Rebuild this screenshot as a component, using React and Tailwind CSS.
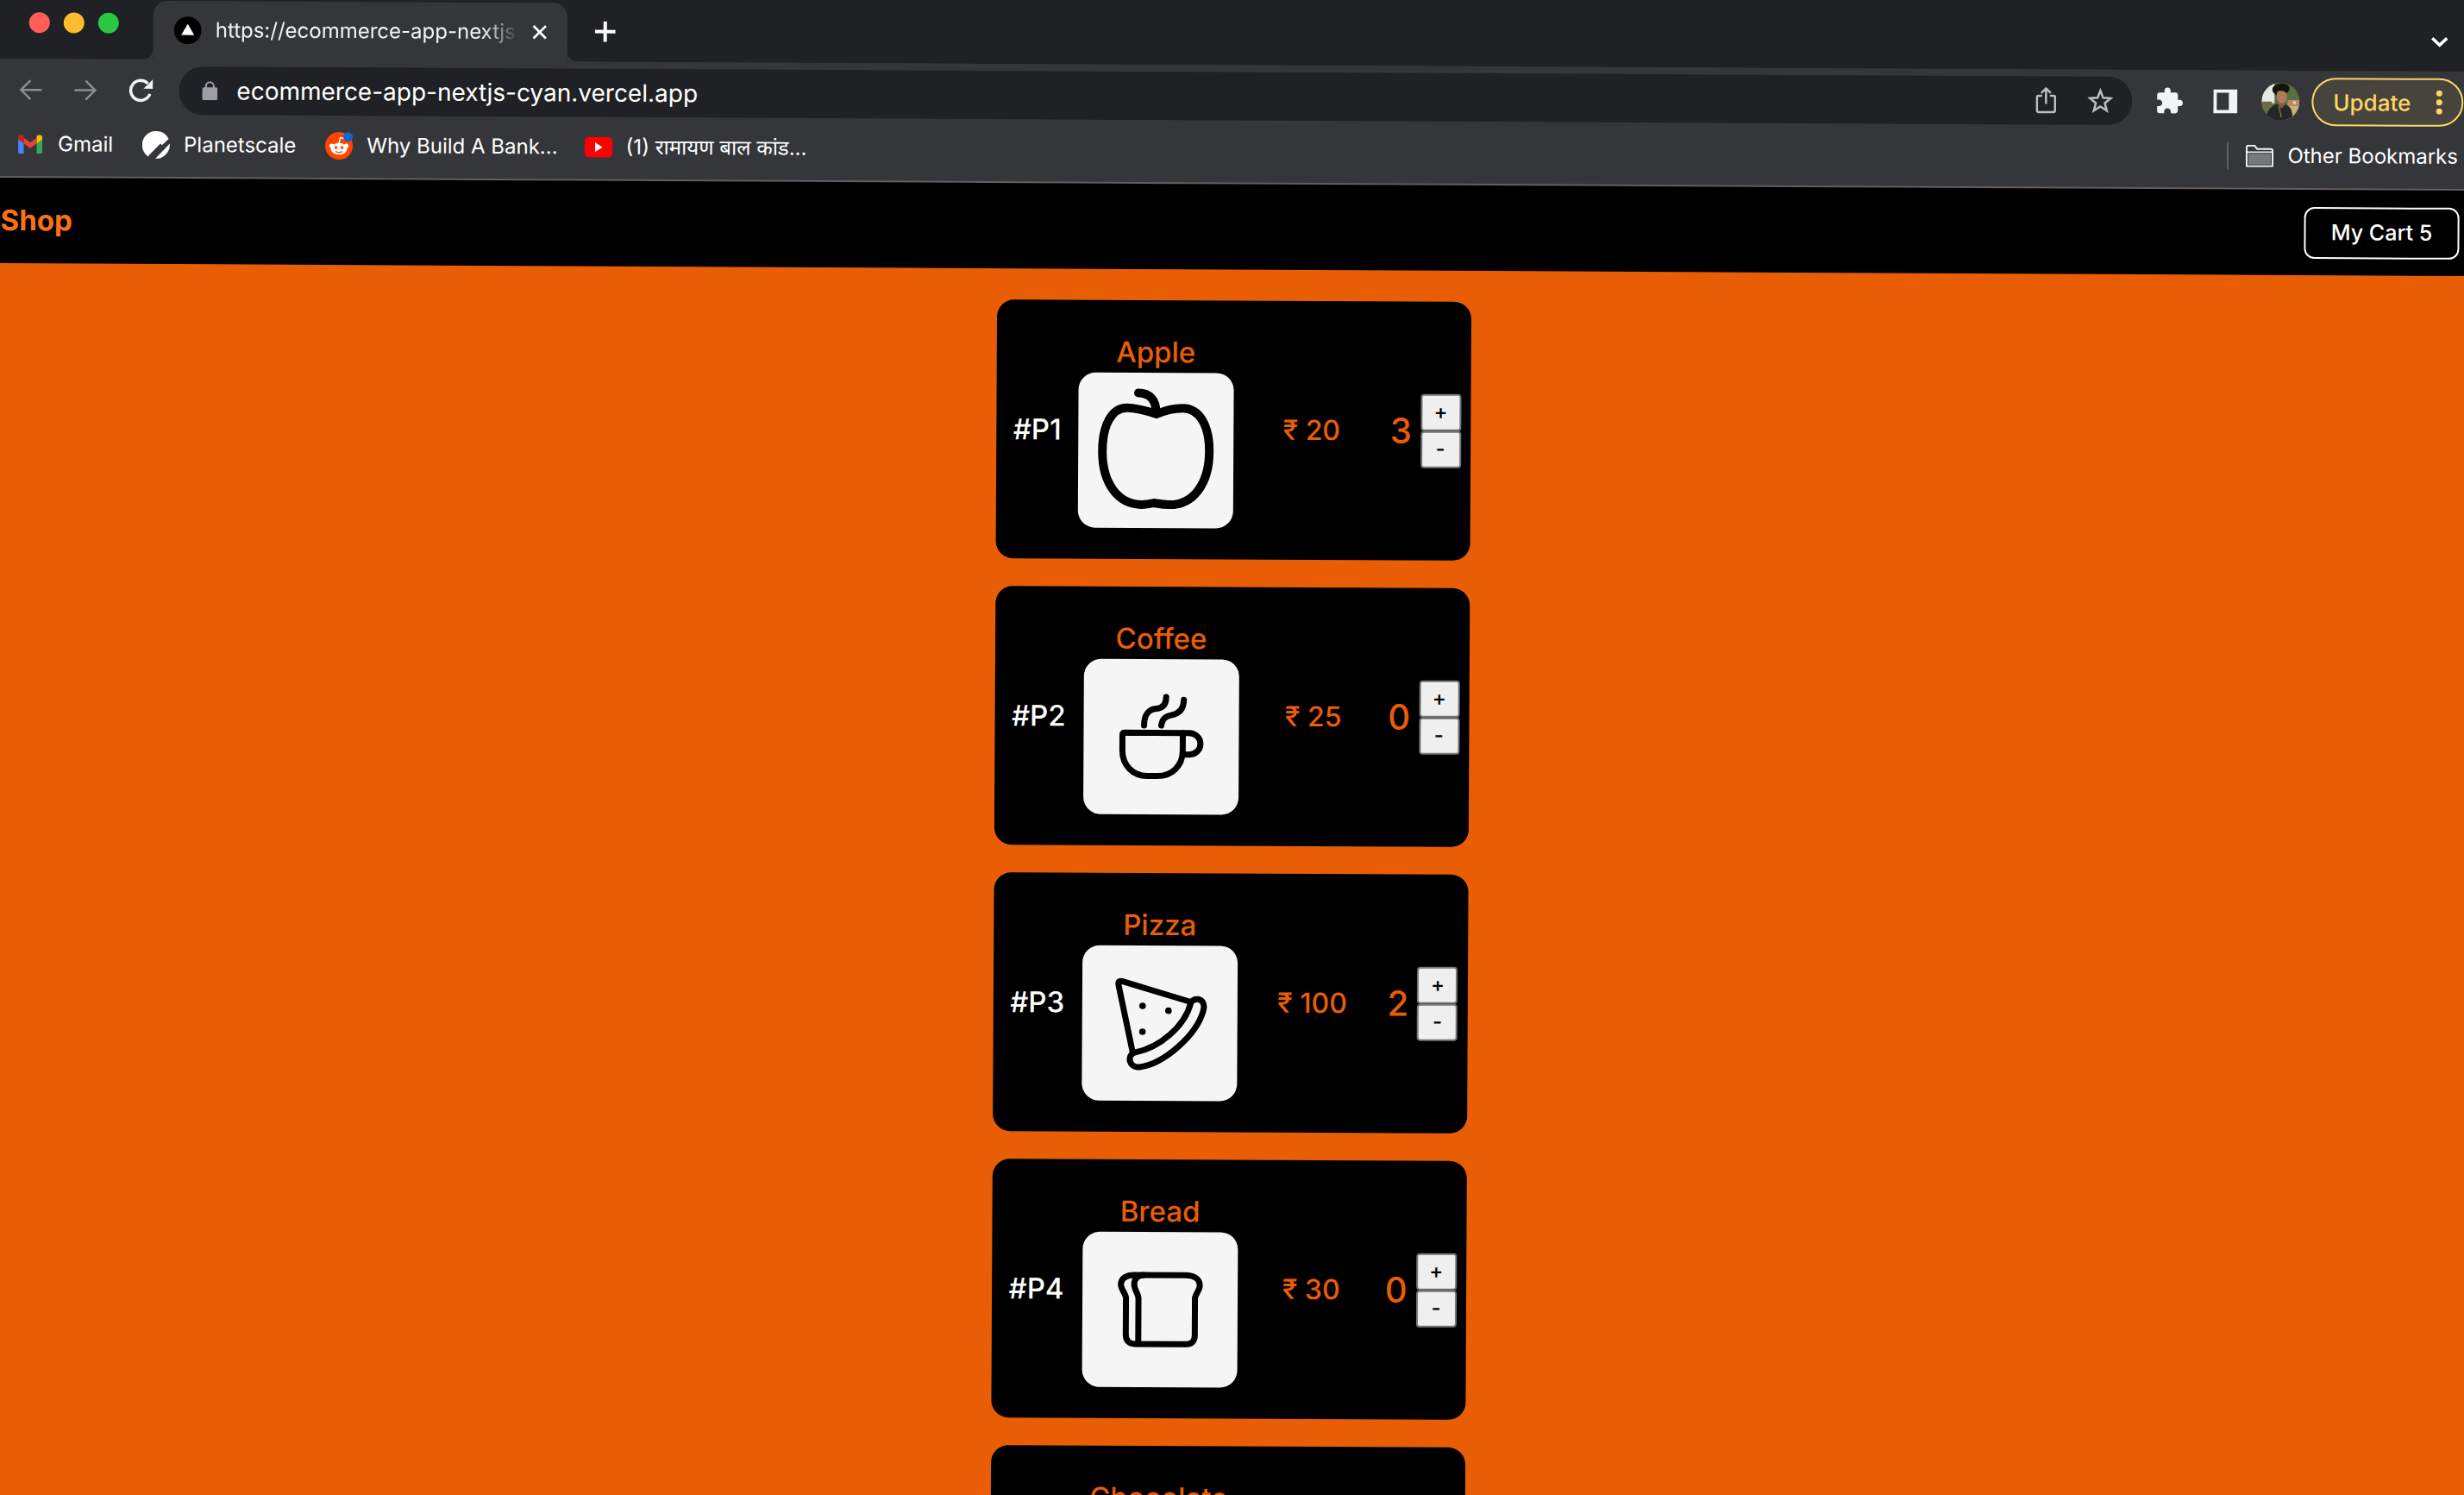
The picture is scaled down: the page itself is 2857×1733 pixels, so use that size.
import React from "react";
import { MdExtension } from "react-icons/md";

const LABEL_WIDTHS = { sm: "w-[55px]", md: "w-[63px]", lg: "w-[65px]" };

function AppleIcon() {
  return (
    <svg viewBox="0 0 180 180" className="size-full" fill="none" stroke="#000" strokeWidth="10" aria-hidden="true">
      <path d="M69.5 23.5C82 23.5 90 31 90 46" strokeLinecap="round" />
      <path d="M90.5 48C78 44 67 41 56.5 41C38 41 28 62 28 91C28 128 46 153 74 153C80 153 84 152 88 151C94 152 98 153 106 153C134 153 152 128 152 91C152 62 141 41 121 41C112 41 102 43 90.5 48Z" />
    </svg>
  );
}

function CoffeeIcon() {
  return (
    <svg viewBox="0 0 180 180" className="size-full" fill="none" stroke="#000" strokeWidth="7" strokeLinecap="round" strokeLinejoin="round" aria-hidden="true">
      <path d="M48 85.5H115V106C115 124 102 135.5 86 135.5H74C57 135.5 45 123 45 106V88Q45 85.5 48 85.5Z" />
      <path d="M115 85.5H122C130 85.5 135.5 91 135.5 98C135.5 105 130 110.5 122 110.5H116" />
      <path d="M70 77C70 64 76 58 84 57.5C91 57 95.5 53 95.5 44" />
      <path d="M90 77C91 69 95 66 101 65C111 63 116 57 116 47" />
    </svg>
  );
}

function PizzaIcon() {
  return (
    <svg viewBox="0 0 180 180" className="size-full" fill="none" stroke="#000" strokeWidth="7" strokeLinejoin="round" aria-hidden="true">
      <path d="M125 65L46 41.5Q41 40.5 42 46L59 125" />
      <path d="M126 66C128 62.5 131 61.5 135 62C140.5 63.5 142 69 140.5 75C133 103 96 137 67 141C60 142 55 137 55.5 131C56 127 58 125 62 124C90 118 119 94 126 66Z" />
      <g fill="#000" stroke="none">
        <circle cx="70" cy="70" r="3.8" />
        <circle cx="100" cy="75.5" r="3.8" />
        <circle cx="70" cy="100" r="3.8" />
      </g>
    </svg>
  );
}

function BreadIcon() {
  return (
    <svg viewBox="0 0 180 180" className="size-full" fill="none" stroke="#000" strokeWidth="7" strokeLinejoin="round" aria-hidden="true">
      <path d="M60 50H119C129 50 136 54 136 62C136 68 130.5 72 130.5 77V120C130.5 126 127 130 121 130H61C54 130 50.5 126 50.5 119V77C50.5 72 44.5 67 44.5 61C44.5 54 51 50 60 50Z" />
      <path d="M72 50C64 50 60 54 60 61C60 67 65 72 65 77V130" />
    </svg>
  );
}

const PRODUCTS = [
  { name: "Apple", code: "#P1", price: "₹ 20", qty: 3, Icon: AppleIcon, label: "sm" },
  { name: "Coffee", code: "#P2", price: "₹ 25", qty: 0, Icon: CoffeeIcon, label: "md" },
  { name: "Pizza", code: "#P3", price: "₹ 100", qty: 2, Icon: PizzaIcon, label: "md" },
  { name: "Bread", code: "#P4", price: "₹ 30", qty: 0, Icon: BreadIcon, label: "lg" },
  { name: "Chocolate", label: "lg" },
];

const STEP_BUTTON = "h-[43px] w-[47px] rounded border-2 border-[#767676] bg-[#efefef] pb-0.5 text-2xl leading-8 text-black";

function ProductCard({ name, code, price, qty, Icon, label }) {
  return (
    <li className="flex h-[300px] w-[550px] items-center justify-between rounded-[20px] bg-black pr-[11px] pl-5 text-[33px] leading-[48px] font-medium text-[#e95d05]">
      <div className="flex items-center gap-5">
        <span className={`${LABEL_WIDTHS[label]} whitespace-nowrap text-white`}>{code}</span>
        <div className="flex w-[180px] flex-col items-center">
          <h2 className="whitespace-nowrap">{name}</h2>
          <div className="size-[180px] rounded-[20px] bg-[#f5f5f5]">{Icon && <Icon />}</div>
        </div>
      </div>
      {price && <span className="text-[32px]">{price}</span>}
      {price && (
        <div className="flex items-center gap-2.5">
          <span className="text-[40px]">{qty}</span>
          <div className="flex flex-col">
            <button aria-label={`Add one ${name}`} className={STEP_BUTTON}>+</button>
            <button aria-label={`Remove one ${name}`} className={STEP_BUTTON}>-</button>
          </div>
        </div>
      )}
    </li>
  );
}

function TabStrip() {
  return (
    <div className="flex h-[84px] items-end bg-[#202124] pr-[26px]">
      <div className="flex h-[84px] w-[164px] items-center gap-4 pl-[34px]">
        <button aria-label="Close window" className="size-6 rounded-full bg-[#ff5f57]" />
        <button aria-label="Minimize window" className="size-6 rounded-full bg-[#febc2e]" />
        <button aria-label="Zoom window" className="size-6 rounded-full bg-[#28c840]" />
      </div>
      <svg viewBox="0 0 14 14" className="size-3.5 text-[#35363a]" aria-hidden="true"><path d="M14 0V14H0C9 14 14 9 14 0Z" fill="currentColor" /></svg>
      <div className="flex h-[68px] w-[480px] items-center rounded-t-2xl bg-[#35363a] pl-6">
        <svg viewBox="0 0 32 32" className="size-8 shrink-0" aria-hidden="true"><circle cx="16" cy="16" r="16" fill="#000" /><path d="M16 8.5L23.5 21.5H8.5Z" fill="#fff" /></svg>
        <span className="ml-4 w-[352px] shrink-0 overflow-hidden whitespace-nowrap text-2xl text-[#f1f3f4] [mask-image:linear-gradient(to_right,black_88%,transparent)]">https://ecommerce-app-nextjs-</span>
        <button aria-label="Close tab" className="ml-2 flex size-8 shrink-0 items-center justify-center text-white">
          <svg viewBox="0 0 20 20" className="size-[18px]" stroke="currentColor" strokeWidth="3"><path d="M2 2L18 18M18 2L2 18" /></svg>
        </button>
      </div>
      <svg viewBox="0 0 14 14" className="size-3.5 text-[#35363a]" aria-hidden="true"><path d="M0 0V14H14C5 14 0 9 0 0Z" fill="currentColor" /></svg>
      <button aria-label="New tab" className="ml-4 flex h-[70px] w-7 items-center justify-center text-white">
        <svg viewBox="0 0 24 24" className="size-6" stroke="currentColor" strokeWidth="4"><path d="M12 0V24M0 12H24" /></svg>
      </button>
      <button aria-label="Search tabs" className="ml-auto flex h-[68px] items-center text-white">
        <svg viewBox="0 0 20 12" className="h-3 w-5" fill="none" stroke="currentColor" strokeWidth="3.5"><path d="M1.5 1.5L10 9.5L18.5 1.5" /></svg>
      </button>
    </div>
  );
}

function Avatar() {
  return (
    <svg viewBox="0 0 44 44" className="size-11" aria-hidden="true">
      <defs><clipPath id="avatar"><circle cx="22" cy="22" r="22" /></clipPath></defs>
      <g clipPath="url(#avatar)">
        <rect width="44" height="44" fill="#55713f" />
        <path d="M0 0H15V24H0Z" fill="#e6e8e4" />
        <path d="M0 22H12V32H0Z" fill="#6c6d45" />
        <path d="M30 20H44V27H30Z" fill="#b98a5b" />
        <path d="M28 27H44V44H28Z" fill="#c9b27e" />
        <circle cx="33" cy="31" r="2" fill="#d8a530" />
        <circle cx="38" cy="23" r="2" fill="#d6d0c4" />
        <path d="M5 44C5 31 13 26 20 24L27 25C35 28 36 34 36 44Z" fill="#23262b" />
        <path d="M19 20H27V26L23 30L19 25Z" fill="#8c5a41" />
        <ellipse cx="23.5" cy="16" rx="6" ry="8" fill="#b07a5c" />
        <path d="M14 12C10 7 14 2 21 1C29 -1 35 5 31 10L29 12C26 9 21 9 18 10L17 15Z" fill="#17140f" />
        <path d="M20 27L23 40" stroke="#b08b2a" />
      </g>
    </svg>
  );
}

function Toolbar() {
  return (
    <div className="flex h-[72px] items-center bg-[#35363a] pr-2 pl-[22px]">
      <button aria-label="Back" className="text-[#8c8d90]">
        <svg viewBox="0 0 28 28" className="size-7" fill="none" stroke="currentColor" strokeWidth="2.5"><path d="M27 14H3M14 3L3 14L14 25" /></svg>
      </button>
      <button aria-label="Forward" className="ml-9 text-[#8c8d90]">
        <svg viewBox="0 0 28 28" className="size-7" fill="none" stroke="currentColor" strokeWidth="2.5"><path d="M1 14H25M14 3L25 14L14 25" /></svg>
      </button>
      <button aria-label="Reload" className="ml-9 text-[#f1f3f4]">
        <svg viewBox="0 0 28 28" className="size-7" fill="none"><path d="M24.5 18A11.5 11.5 0 1 1 22 6" stroke="currentColor" strokeWidth="3.5" /><path d="M28 1V12H17Z" fill="currentColor" /></svg>
      </button>
      <div className="ml-[30px] flex h-14 flex-1 items-center rounded-full bg-[#202124] pr-[22px] pl-[27px]">
        <svg viewBox="0 0 18 22" className="h-[22px] w-[18px] shrink-0 text-[#9aa0a6]" aria-hidden="true"><rect y="7" width="18" height="15" rx="2" fill="currentColor" /><path d="M4.5 8V5.5A4.5 4.5 0 0 1 13.5 5.5V8" fill="none" stroke="currentColor" strokeWidth="2" /></svg>
        <input aria-label="Address" readOnly value="ecommerce-app-nextjs-cyan.vercel.app" className="ml-[22px] min-w-0 flex-1 bg-transparent text-[28px] leading-9 text-white outline-none" />
        <button aria-label="Share" className="text-[#bdbec0]">
          <svg viewBox="0 0 24 32" className="h-8 w-6" fill="none" stroke="currentColor" strokeWidth="2.5"><path d="M7.5 10.5H3.5Q1.5 10.5 1.5 12.5V27.5Q1.5 29.5 3.5 29.5H20.5Q22.5 29.5 22.5 27.5V12.5Q22.5 10.5 20.5 10.5H16.5M12 20V3M6.5 7.5L12 2L17.5 7.5" /></svg>
        </button>
        <button aria-label="Bookmark this page" className="ml-9 text-[#bdbec0]">
          <svg viewBox="0 0 30 30" className="size-[30px]" fill="none" stroke="currentColor" strokeWidth="2.5"><path d="M15 3.5L18.2 11.6L27 12.2L20.2 17.8L22.5 26.5L15 21.7L7.5 26.5L9.8 17.8L3 12.2L11.8 11.6Z" /></svg>
        </button>
      </div>
      <button aria-label="Extensions" className="ml-[26px] text-[#f1f3f4]"><MdExtension className="size-[34px]" /></button>
      <button aria-label="Side panel" className="ml-[34px] text-[#f1f3f4]">
        <svg viewBox="0 0 28 28" className="size-7"><path d="M0 0H28V28H0ZM4 4V24H18V4Z" fill="currentColor" fillRule="evenodd" /></svg>
      </button>
      <button aria-label="Profile" className="ml-7"><Avatar /></button>
      <button className="ml-3.5 flex h-14 w-[176px] items-center justify-between rounded-full border-2 border-[#fdd663] bg-[#46443d] pr-[22px] pl-[23px] text-[26px] font-medium text-[#fdd663]">
        Update
        <svg viewBox="0 0 8 28" className="h-7 w-2" fill="currentColor" aria-hidden="true"><circle cx="4" cy="3.5" r="3.5" /><circle cx="4" cy="14" r="3.5" /><circle cx="4" cy="24.5" r="3.5" /></svg>
      </button>
    </div>
  );
}

function BookmarksBar() {
  const link = "flex items-center whitespace-nowrap";
  return (
    <div className="flex h-[66px] items-start border-b-2 border-[#5f6065] bg-[#35363a] pt-[11px] pr-3.5 pl-[22px] text-2xl text-white">
      <a href="#gmail" className={link}>
        <svg viewBox="0 0 28 22" className="mr-[18px] h-[22px] w-7" aria-hidden="true">
          <path d="M0 4V20Q0 22 2 22H6.5V9.5L3 4Z" fill="#4285f4" />
          <path d="M28 4V20Q28 22 26 22H21.5V9.5L25 4Z" fill="#34a853" />
          <path d="M6.5 3.5L14 9L21.5 3.5V10L14 15.5L6.5 10Z" fill="#ea4335" />
          <path d="M0 3.500C0 0 3.5 -1 6.5 1.5V10L0 5.5Z" fill="#c5221f" />
          <path d="M28 3.5C28 0 24.5 -1 21.5 1.5V10L28 5.5Z" fill="#fbbc04" />
        </svg>
        Gmail
      </a>
      <a href="#planetscale" className={`${link} ml-[34px]`}>
        <svg viewBox="0 0 32 32" className="mr-4 size-8" aria-hidden="true">
          <path d="M16 0A16 16 0 0 1 30.5 9L8 30A16 16 0 0 1 16 0Z" fill="#fff" />
          <path d="M0 16A16 16 0 0 0 5 27.7L16 17V0A16 16 0 0 0 0 16Z" fill="#fff" />
          <path d="M8 30L22 15.5" stroke="#35363a" strokeWidth="3" />
          <path d="M31.8 14.5L15 32A16 16 0 0 0 31.8 14.5Z" fill="#fff" />
        </svg>
        Planetscale
      </a>
      <a href="#reddit" className={`${link} ml-[34px]`}>
        <svg viewBox="0 0 32 32" className="mr-4 size-8" aria-hidden="true">
          <circle cx="16" cy="16" r="16" fill="#ff4500" />
          <circle cx="7.5" cy="16" r="2.6" fill="#fff" /><circle cx="24.5" cy="16" r="2.6" fill="#fff" />
          <ellipse cx="16" cy="19.5" rx="9.5" ry="6.8" fill="#fff" />
          <path d="M16 13L17.5 6.5L22 7.5" stroke="#fff" strokeWidth="1.5" fill="none" />
          <circle cx="12.5" cy="18" r="1.8" fill="#ff4500" /><circle cx="19.5" cy="18" r="1.8" fill="#ff4500" />
          <path d="M12 22.5Q16 25 20 22.5" stroke="#ff4500" strokeWidth="1.3" fill="none" />
          <circle cx="26.5" cy="5.5" r="5.5" fill="#0a66c8" />
        </svg>
        Why Build A Bank...
      </a>
      <a href="#youtube" className={`${link} ml-[31px]`}>
        <svg viewBox="0 0 32 24" className="mr-4 h-6 w-8" aria-hidden="true"><rect width="32" height="24" rx="5" fill="#f00" /><path d="M12 6.5L20.5 12L12 17.5Z" fill="#fff" /></svg>
        (1) रामायण बाल कांड...
      </a>
      <div className="ml-auto flex items-center">
        <span className="mr-5 h-8 w-0.5 bg-[#5f6065]" />
        <a href="#other" className={link}>
          <svg viewBox="0 0 32 26" className="mr-4 h-[26px] w-8" aria-hidden="true"><path d="M1 25V3Q1 1 3 1H10L13 5H29Q31 5 31 7V25Z" fill="none" stroke="#f1f3f4" strokeWidth="2" strokeLinejoin="round" /><path d="M3 10H29V23H3Z" fill="#77787b" /><path d="M1 8.5H31" stroke="#f1f3f4" strokeWidth="1.5" /></svg>
          Other Bookmarks
        </a>
      </div>
    </div>
  );
}

export default function App() {
  return (
    <div className="h-screen overflow-hidden bg-[#e95d05] font-['Inter','Noto_Sans',sans-serif]">
      <div className="-mt-4 -mr-2 origin-top-left rotate-[0.3deg]">
        <header className="bg-[#35363a]">
          <TabStrip />
          <Toolbar />
          <BookmarksBar />
        </header>
        <nav className="flex h-[99px] items-center justify-between bg-black pr-3 pl-0.5">
          <a href="#shop" className="text-[33px] font-bold text-[#f97316]">Shop</a>
          <button className="h-[60px] w-[180px] rounded-xl border-2 border-white text-[25px] font-medium text-white">My Cart 5</button>
        </nav>
        <main>
          <ul className="flex flex-col items-center gap-8 pt-9">
            {PRODUCTS.map((p) => <ProductCard key={p.name} {...p} />)}
          </ul>
        </main>
      </div>
    </div>
  );
}
